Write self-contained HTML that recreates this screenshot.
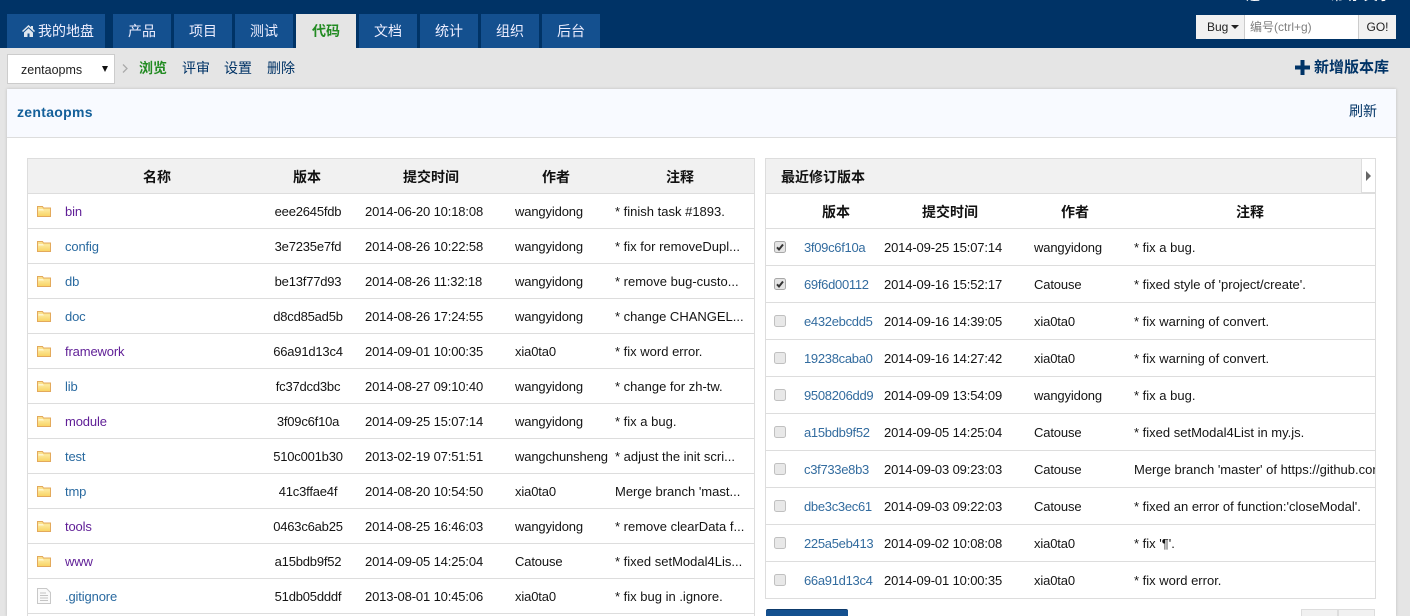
<!DOCTYPE html>
<html lang="zh-CN">
<head>
<meta charset="utf-8">
<title>zentaopms</title>
<style>
html,body{margin:0;padding:0;width:1410px;height:616px;overflow:hidden;background:#e5e5e5}
body{position:relative;font-family:"Liberation Sans","Noto Sans CJK SC",sans-serif;font-size:13px;color:#141414}
.abs,.tab,.r,.h,.hh,.nav{position:absolute}
.top{left:0;top:0;width:1410px;height:48px;background:#003366;position:absolute}
.tab{top:14px;height:34px;line-height:34px;background:#14508f;color:#eef;text-align:center;font-size:14px}
.tab.on{background:#e5e5e5;color:#228b22;font-weight:bold}
.nav{top:59px;line-height:18px;font-size:14px;color:#003366}
.r{left:27px;width:728px;height:35px;box-sizing:border-box;border:1px solid #ddd;border-width:0 1px 1px 1px;background:#fff;overflow:hidden;letter-spacing:-.14px}
.q{left:765px;width:611px;height:37px}
.r span,.r svg{position:absolute;top:0;white-space:nowrap}
.r span{line-height:36px}
.q span{line-height:38px}
.h{font-weight:bold;font-size:14px;transform:translateX(-50%);line-height:18px;white-space:nowrap;color:#111}
.n{left:37px;color:#2a6aa0}
.v{color:#5f1e96}
.b{left:229px;width:102px;text-align:center;letter-spacing:-.2px}
.c{left:337px}
.d{left:487px}
.r .e{left:587px;letter-spacing:0}
.i{left:9px;top:12px !important}
.k{left:8px;top:12px !important;width:12px;height:12px}
.r .l{left:38px;color:#336c9f;letter-spacing:-.3px}
.m{left:118px}
.o{left:268px}
.r .p{left:368px;letter-spacing:0}
</style>
</head>
<body>
<svg width="0" height="0" style="position:absolute">
<defs>
<linearGradient id="fg" x1="0" y1="0" x2="0" y2="1"><stop offset="0" stop-color="#fdeaa0"/><stop offset="1" stop-color="#f9d465"/></linearGradient>
<symbol id="fo" viewBox="0 0 14 11"><path d="M.5 10.500V.5h5l1 1.500h7v8.500z" fill="#fbe28c" stroke="#e3a95c"/><path d="M1 3.500h12v6.500H1z" fill="url(#fg)"/><path d="M1.500 3h4.500l1 1.500H1.500z" fill="#fff6d0"/></symbol>
<symbol id="fi" viewBox="0 0 14 16"><path d="M.5.5h9l4 4v11H.5z" fill="#fafafa" stroke="#c8c8c8"/><path d="M3 5h6M3 7.500h8M3 10h8M3 12.500h8" stroke="#c4c4c4"/></symbol>
<symbol id="cb" viewBox="0 0 12 12"><rect x=".5" y=".5" width="11" height="11" rx="2" fill="#e8e8e8" stroke="#c0c0c0"/></symbol>
<symbol id="cc" viewBox="0 0 12 12"><rect x=".5" y=".5" width="11" height="11" rx="2" fill="#e4e4e4" stroke="#a8a8a8"/><path d="M3 6.300l2 2.200 4-5" fill="none" stroke="#333" stroke-width="2"/></symbol>
</defs>
</svg>

<div class="top"></div>
<div class="abs" style="left:1246px;top:-14px;color:#fff;font-size:14px;line-height:18px;white-space:nowrap">退 <span style="margin-left:66px">帮助</span> <span style="margin-left:2px">关于</span></div>

<div class="tab" style="left:7px;width:98px;padding-left:4px;box-sizing:border-box"><svg width="13" height="12" viewBox="0 0 13 12" style="vertical-align:-1px;margin-right:3px"><path d="M6.500 0L0 6l1 1 5.500-5 5.500 5 1-1-2-2V1h-2v1.200zM2 7.500V12h3.500V8.500h2V12H11V7.500L6.500 3.400z" fill="#dfe6ee"/></svg>我的地盘</div>
<div class="tab" style="left:113px;width:58px">产品</div>
<div class="tab" style="left:174px;width:58px">项目</div>
<div class="tab" style="left:235px;width:58px">测试</div>
<div class="tab on" style="left:296px;width:60px">代码</div>
<div class="tab" style="left:359px;width:58px">文档</div>
<div class="tab" style="left:420px;width:58px">统计</div>
<div class="tab" style="left:481px;width:58px">组织</div>
<div class="tab" style="left:542px;width:58px">后台</div>

<div class="abs" style="left:1196px;top:15px;width:49px;height:24px;background:#f1f1f1;border-right:1px solid #ccc;box-sizing:border-box;font-size:12px;line-height:24px;padding-left:11px;color:#222">Bug<span style="display:inline-block;margin-left:3px;border:4px solid transparent;border-top-color:#222;border-bottom:0;vertical-align:2px"></span></div>
<div class="abs" style="left:1245px;top:15px;width:113px;height:24px;background:#fff;font-size:12px;line-height:24px;padding-left:5px;box-sizing:border-box;color:#808080">编号(ctrl+g)</div>
<div class="abs" style="left:1358px;top:15px;width:38px;height:24px;background:#f1f1f1;border-left:1px solid #ccc;box-sizing:border-box;font-size:12px;line-height:24px;text-align:center;color:#222">GO!</div>

<div class="abs" style="left:7px;top:54px;width:108px;height:30px;background:#fff;border:1px solid #ccc;box-sizing:border-box;font-size:12.500px;line-height:30px;padding-left:13px;color:#222">zentaopms<span style="position:absolute;left:94px;top:11px;border:3.500px solid transparent;border-top:6px solid #111;border-bottom:0"></span></div>
<svg class="abs" style="left:122px;top:64px" width="7" height="9" viewBox="0 0 7 9"><path d="M1 .5l4 4-4 4" fill="none" stroke="#aaa" stroke-width="1.300"/></svg>
<div class="nav" style="left:139px;color:#228b22;font-weight:bold">浏览</div>
<div class="nav" style="left:182px">评审</div>
<div class="nav" style="left:224px">设置</div>
<div class="nav" style="left:267px">删除</div>
<svg class="abs" style="left:1295px;top:60px" width="15" height="15" viewBox="0 0 15 15"><path d="M5.500 0h4v5.500H15v4H9.500V15h-4V9.500H0v-4h5.500z" fill="#003366"/></svg>
<div class="nav" style="left:1314px;font-weight:bold;font-size:15px">新增版本库</div>

<div class="abs" style="left:7px;top:89px;width:1389px;height:527px;background:#fff;box-shadow:0 0 3px rgba(0,0,0,.18)"></div>
<div class="abs" style="left:7px;top:89px;width:1389px;height:49px;background:#f8faff;border-bottom:1px solid #ddd;box-sizing:border-box"></div>
<div class="abs" style="left:17px;top:103px;font-size:14px;font-weight:bold;line-height:18px;letter-spacing:.3px;color:#14609a">zentaopms</div>
<div class="nav" style="left:1349px;top:102px">刷新</div>

<!-- left table header -->
<div class="abs" style="left:27px;top:158px;width:728px;height:36px;box-sizing:border-box;background:#f1f1f1;border:1px solid #ddd"></div>
<div class="h" style="left:157px;top:168px">名称</div>
<div class="h" style="left:307px;top:168px">版本</div>
<div class="h" style="left:431px;top:168px">提交时间</div>
<div class="h" style="left:556px;top:168px">作者</div>
<div class="h" style="left:680px;top:168px">注释</div>

<!-- left rows -->
<div class="r" style="top:194px"><svg class="i" width="14" height="11"><use href="#fo"/></svg><span class="n v">bin</span><span class="b">eee2645fdb</span><span class="c">2014-06-20 10:18:08</span><span class="d">wangyidong</span><span class="e">* finish task #1893.</span></div>
<div class="r" style="top:229px"><svg class="i" width="14" height="11"><use href="#fo"/></svg><span class="n">config</span><span class="b">3e7235e7fd</span><span class="c">2014-08-26 10:22:58</span><span class="d">wangyidong</span><span class="e">* fix for removeDupl...</span></div>
<div class="r" style="top:264px"><svg class="i" width="14" height="11"><use href="#fo"/></svg><span class="n">db</span><span class="b">be13f77d93</span><span class="c">2014-08-26 11:32:18</span><span class="d">wangyidong</span><span class="e">* remove bug-custo...</span></div>
<div class="r" style="top:299px"><svg class="i" width="14" height="11"><use href="#fo"/></svg><span class="n">doc</span><span class="b">d8cd85ad5b</span><span class="c">2014-08-26 17:24:55</span><span class="d">wangyidong</span><span class="e">* change CHANGEL...</span></div>
<div class="r" style="top:334px"><svg class="i" width="14" height="11"><use href="#fo"/></svg><span class="n v">framework</span><span class="b">66a91d13c4</span><span class="c">2014-09-01 10:00:35</span><span class="d">xia0ta0</span><span class="e">* fix word error.</span></div>
<div class="r" style="top:369px"><svg class="i" width="14" height="11"><use href="#fo"/></svg><span class="n">lib</span><span class="b">fc37dcd3bc</span><span class="c">2014-08-27 09:10:40</span><span class="d">wangyidong</span><span class="e">* change for zh-tw.</span></div>
<div class="r" style="top:404px"><svg class="i" width="14" height="11"><use href="#fo"/></svg><span class="n v">module</span><span class="b">3f09c6f10a</span><span class="c">2014-09-25 15:07:14</span><span class="d">wangyidong</span><span class="e">* fix a bug.</span></div>
<div class="r" style="top:439px"><svg class="i" width="14" height="11"><use href="#fo"/></svg><span class="n">test</span><span class="b">510c001b30</span><span class="c">2013-02-19 07:51:51</span><span class="d">wangchunsheng</span><span class="e">* adjust the init scri...</span></div>
<div class="r" style="top:474px"><svg class="i" width="14" height="11"><use href="#fo"/></svg><span class="n">tmp</span><span class="b">41c3ffae4f</span><span class="c">2014-08-20 10:54:50</span><span class="d">xia0ta0</span><span class="e">Merge branch 'mast...</span></div>
<div class="r" style="top:509px"><svg class="i" width="14" height="11"><use href="#fo"/></svg><span class="n v">tools</span><span class="b">0463c6ab25</span><span class="c">2014-08-25 16:46:03</span><span class="d">wangyidong</span><span class="e">* remove clearData f...</span></div>
<div class="r" style="top:544px"><svg class="i" width="14" height="11"><use href="#fo"/></svg><span class="n v">www</span><span class="b">a15bdb9f52</span><span class="c">2014-09-05 14:25:04</span><span class="d">Catouse</span><span class="e">* fixed setModal4Lis...</span></div>
<div class="r" style="top:579px"><svg class="i" style="top:9px !important" width="14" height="16"><use href="#fi"/></svg><span class="n">.gitignore</span><span class="b">51db05dddf</span><span class="c">2013-08-01 10:45:06</span><span class="d">xia0ta0</span><span class="e">* fix bug in .ignore.</span></div>
<div class="abs" style="left:27px;top:614px;width:728px;height:2px;box-sizing:border-box;border:1px solid #ddd;border-width:0 1px;background:#fff"></div>

<!-- right table header -->
<div class="abs" style="left:765px;top:158px;width:611px;height:36px;box-sizing:border-box;background:#f1f1f1;border:1px solid #ddd"></div>
<div class="h" style="left:781px;top:168px;transform:none">最近修订版本</div>
<div class="abs" style="left:1361px;top:158px;width:15px;height:35px;box-sizing:border-box;background:#fff;border:1px solid #ddd"><span style="position:absolute;left:4px;top:12px;border:5px solid transparent;border-left:5px solid #666;border-right:0"></span></div>

<div class="r q" style="top:194px;height:35px"></div>
<div class="h" style="left:836px;top:203px">版本</div>
<div class="h" style="left:950px;top:203px">提交时间</div>
<div class="h" style="left:1075px;top:203px">作者</div>
<div class="h" style="left:1250px;top:203px">注释</div>

<!-- right rows -->
<div class="r q" style="top:229px"><svg class="k"><use href="#cc"/></svg><span class="l">3f09c6f10a</span><span class="m">2014-09-25 15:07:14</span><span class="o">wangyidong</span><span class="p">* fix a bug.</span></div>
<div class="r q" style="top:266px"><svg class="k"><use href="#cc"/></svg><span class="l">69f6d00112</span><span class="m">2014-09-16 15:52:17</span><span class="o">Catouse</span><span class="p">* fixed style of 'project/create'.</span></div>
<div class="r q" style="top:303px"><svg class="k"><use href="#cb"/></svg><span class="l">e432ebcdd5</span><span class="m">2014-09-16 14:39:05</span><span class="o">xia0ta0</span><span class="p">* fix warning of convert.</span></div>
<div class="r q" style="top:340px"><svg class="k"><use href="#cb"/></svg><span class="l">19238caba0</span><span class="m">2014-09-16 14:27:42</span><span class="o">xia0ta0</span><span class="p">* fix warning of convert.</span></div>
<div class="r q" style="top:377px"><svg class="k"><use href="#cb"/></svg><span class="l">9508206dd9</span><span class="m">2014-09-09 13:54:09</span><span class="o">wangyidong</span><span class="p">* fix a bug.</span></div>
<div class="r q" style="top:414px"><svg class="k"><use href="#cb"/></svg><span class="l">a15bdb9f52</span><span class="m">2014-09-05 14:25:04</span><span class="o">Catouse</span><span class="p">* fixed setModal4List in my.js.</span></div>
<div class="r q" style="top:451px"><svg class="k"><use href="#cb"/></svg><span class="l">c3f733e8b3</span><span class="m">2014-09-03 09:23:03</span><span class="o">Catouse</span><span class="p">Merge branch 'master' of https://github.com</span></div>
<div class="r q" style="top:488px"><svg class="k"><use href="#cb"/></svg><span class="l">dbe3c3ec61</span><span class="m">2014-09-03 09:22:03</span><span class="o">Catouse</span><span class="p">* fixed an error of function:'closeModal'.</span></div>
<div class="r q" style="top:525px"><svg class="k"><use href="#cb"/></svg><span class="l">225a5eb413</span><span class="m">2014-09-02 10:08:08</span><span class="o">xia0ta0</span><span class="p">* fix '¶'.</span></div>
<div class="r q" style="top:562px"><svg class="k"><use href="#cb"/></svg><span class="l">66a91d13c4</span><span class="m">2014-09-01 10:00:35</span><span class="o">xia0ta0</span><span class="p">* fix word error.</span></div>

<div class="abs" style="left:766px;top:609px;width:82px;height:7px;background:#14508f;border-top:1px solid #0d3a6b;box-sizing:border-box;border-radius:2px 2px 0 0"></div>
<div class="abs" style="left:1301px;top:609px;width:37px;height:7px;background:#f1f1f1;border:1px solid #ddd;border-bottom:0;box-sizing:border-box"></div>
<div class="abs" style="left:1338px;top:609px;width:37px;height:7px;background:#f1f1f1;border:1px solid #ddd;border-bottom:0;box-sizing:border-box"></div>
</body>
</html>
